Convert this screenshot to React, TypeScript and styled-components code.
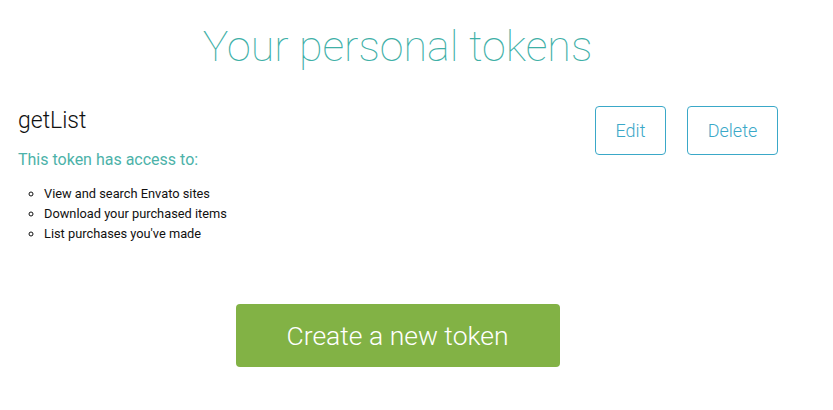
import React from "react";
import styled, { createGlobalStyle } from "styled-components";

const Global = createGlobalStyle`
  html, body { margin: 0; padding: 0; background: #fff; }
  body { font-family: Roboto, "Open Sans", sans-serif; }
`;

const Page = styled.div`
  width: 795px;
  height: 410px;
  box-sizing: border-box;
  display: flex;
  flex-direction: column;
`;

const Title = styled.h1`
  margin: 18px 0 0;
  text-align: center;
  font-weight: 100;
  font-size: 43px;
  line-height: 56px;
  color: #3fb0a7;
`;

const TokenRow = styled.div`
  display: flex;
  justify-content: space-between;
  align-items: flex-start;
  padding: 0 17px 0 18px;
  margin-top: 32px;
`;

const TokenInfo = styled.div`
  display: flex;
  flex-direction: column;
`;

const TokenName = styled.h2`
  margin: 0;
  font-weight: 300;
  font-size: 23px;
  line-height: 30px;
  color: #111;
`;

const AccessLabel = styled.p`
  margin: 14px 0 0;
  font-size: 16px;
  line-height: 20px;
  color: #4cb2a9;
`;

const Perms = styled.ul`
  margin: 14px 0 0;
  padding-left: 26px;
  list-style-type: circle;
  font-size: 12.8px;
  line-height: 20px;
  color: #111;
`;

const Actions = styled.div`
  display: flex;
  gap: 21px;
`;

const OutlineButton = styled.button<{ $w: number }>`
  width: ${(p) => p.$w}px;
  height: 49px;
  box-sizing: border-box;
  border: 1px solid #3aa8c8;
  border-radius: 4px;
  background: #fff;
  color: #3aa8c8;
  font-family: Roboto, sans-serif;
  font-size: 18px;
  font-weight: 300;
  padding: 0;
`;

const CreateButton = styled.button`
  align-self: center;
  margin-top: 60px;
  width: 324px;
  height: 63px;
  border: none;
  border-radius: 4px;
  background: #82b245;
  color: #fff;
  font-family: Roboto, sans-serif;
  font-weight: 300;
  font-size: 26.5px;
`;

export default function App() {
  return (
    <Page>
      <Global />
      <Title>Your personal tokens</Title>
      <TokenRow>
        <TokenInfo>
          <TokenName>getList</TokenName>
          <AccessLabel>This token has access to:</AccessLabel>
          <Perms>
            <li>View and search Envato sites</li>
            <li>Download your purchased items</li>
            <li>List purchases you've made</li>
          </Perms>
        </TokenInfo>
        <Actions>
          <OutlineButton $w={71}>Edit</OutlineButton>
          <OutlineButton $w={91}>Delete</OutlineButton>
        </Actions>
      </TokenRow>
      <CreateButton>Create a new token</CreateButton>
    </Page>
  );
}
